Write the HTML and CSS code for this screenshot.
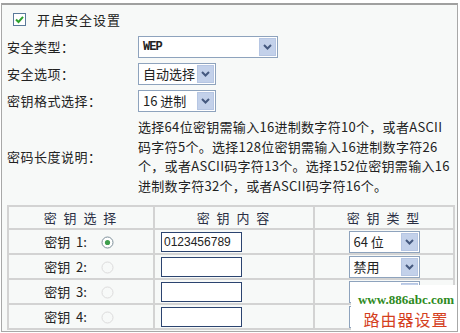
FILE: index.html
```html
<!DOCTYPE html>
<html lang="zh-CN">
<head>
    <meta charset="UTF-8">
    <title>无线安全设置</title>
    <link rel="stylesheet" href="styles.css">
</head>
<body>
<div class="panel">
    <div class="row check-row">
        <span class="checkbox">
            <svg width="13" height="13" viewBox="0 0 13 13"><rect x="0.5" y="0.5" width="12" height="12" fill="#fff" stroke="#5a7a9a"/><path d="M3 6.5l2.5 2.5L10 3.8" stroke="#2da12d" stroke-width="2" fill="none"/></svg>
        </span>
        <span class="check-text">开启安全设置</span>
    </div>
    <div class="row">
        <span class="label">安全类型：</span>
        <div class="sel sel-wep">
            <span class="sel-text wep">WEP</span>
            <span class="sel-btn"><svg width="9" height="6" viewBox="0 0 9 6"><path d="M1 1l3.5 3.5L8 1" stroke="#45597f" stroke-width="2" fill="none"/></svg></span>
        </div>
    </div>
    <div class="row">
        <span class="label">安全选项：</span>
        <div class="sel sel-short">
            <span class="sel-text">自动选择</span>
            <span class="sel-btn"><svg width="9" height="6" viewBox="0 0 9 6"><path d="M1 1l3.5 3.5L8 1" stroke="#45597f" stroke-width="2" fill="none"/></svg></span>
        </div>
    </div>
    <div class="row">
        <span class="label">密钥格式选择：</span>
        <div class="sel sel-short">
            <span class="sel-text">16 进制</span>
            <span class="sel-btn"><svg width="9" height="6" viewBox="0 0 9 6"><path d="M1 1l3.5 3.5L8 1" stroke="#45597f" stroke-width="2" fill="none"/></svg></span>
        </div>
    </div>
    <div class="row desc-row">
        <span class="label">密码长度说明：</span>
        <p class="desc">
            <span>选择64位密钥需输入16进制数字符10个，或者ASCII</span>
            <span>码字符5个。选择128位密钥需输入16进制数字符26</span>
            <span>个，或者ASCII码字符13个。选择152位密钥需输入16</span>
            <span>进制数字符32个，或者ASCII码字符16个。</span>
        </p>
    </div>
    <table class="keys">
        <colgroup>
            <col class="c1">
            <col class="c2">
            <col class="c3">
        </colgroup>
        <tr class="head">
            <td>密 钥 选 择</td>
            <td>密 钥 内 容</td>
            <td>密 钥 类 型</td>
        </tr>
        <tr>
            <td class="pick">密钥 1: <span class="radio"><svg width="13" height="13" viewBox="0 0 13 13"><circle cx="6.5" cy="6.5" r="5.5" fill="#fff" stroke="#7d8f99"/><circle cx="6.5" cy="6.5" r="2.6" fill="#3e9e4c"/></svg></span></td>
            <td class="val"><span class="field">0123456789</span></td>
            <td class="kind">
                <div class="sel sel-kind">
                    <span class="sel-text">64 位</span>
                    <span class="sel-btn"><svg width="9" height="6" viewBox="0 0 9 6"><path d="M1 1l3.5 3.5L8 1" stroke="#45597f" stroke-width="2" fill="none"/></svg></span>
                </div>
            </td>
        </tr>
        <tr>
            <td class="pick">密钥 2: <span class="radio"><svg width="13" height="13" viewBox="0 0 13 13"><circle cx="6.5" cy="6.5" r="5.5" fill="none" stroke="#dcdcdc"/></svg></span></td>
            <td class="val"><span class="field"></span></td>
            <td class="kind">
                <div class="sel sel-kind">
                    <span class="sel-text">禁用</span>
                    <span class="sel-btn"><svg width="9" height="6" viewBox="0 0 9 6"><path d="M1 1l3.5 3.5L8 1" stroke="#45597f" stroke-width="2" fill="none"/></svg></span>
                </div>
            </td>
        </tr>
        <tr>
            <td class="pick">密钥 3: <span class="radio"><svg width="13" height="13" viewBox="0 0 13 13"><circle cx="6.5" cy="6.5" r="5.5" fill="none" stroke="#dcdcdc"/></svg></span></td>
            <td class="val"><span class="field"></span></td>
            <td class="kind">
                <!-- 被右下角水印挡住 -->
                <div class="sel sel-kind">
                    <span class="sel-text"></span>
                    <span class="sel-btn"></span>
                </div>
            </td>
        </tr>
        <tr>
            <td class="pick">密钥 4: <span class="radio"><svg width="13" height="13" viewBox="0 0 13 13"><circle cx="6.5" cy="6.5" r="5.5" fill="none" stroke="#dcdcdc"/></svg></span></td>
            <td class="val"><span class="field"></span></td>
            <td class="kind">
                <div class="sel sel-kind">
                    <span class="sel-text"></span>
                    <span class="sel-btn"></span>
                </div>
            </td>
        </tr>
    </table>
    <div class="stamp">
        <span class="stamp-url">www.886abc.com</span>
        <span class="stamp-name">路由器设置</span>
    </div>
</div>
</body>
</html>
```

FILE: styles.css
```css
* {
    padding: 0;
    margin: 0;
    box-sizing: border-box;
}
body {
    background-color: #ffffff;
    font-family: "Noto Sans CJK SC", "Liberation Sans", sans-serif;
    font-size: 13px;
    color: #222222;
}
.panel {
    position: relative;
    width: 457px;
    height: 329px;
    margin: 3px 0 0 1px;
    border: 1px solid #a8a8a8;
    border-top: 2px solid #a0a0a0;
    background-color: #f7f9f8;
    padding: 0 3px 0 5px;
    overflow: hidden;
}
.row {
    display: flex;
    align-items: center;
    height: 27px;
}
.check-row {
    height: 28px;
    padding-left: 6px;
    gap: 11px;
}
.check-text {
    letter-spacing: 1px;
}
.checkbox {
    display: flex;
    width: 13px;
    height: 13px;
}
.label {
    width: 131px;
    flex-shrink: 0;
    letter-spacing: 0.5px;
}
.sel {
    display: flex;
    align-items: center;
    height: 22px;
    border: 1px solid #8ea3bd;
    background-color: #ffffff;
    padding: 1px;
}
.sel-wep {
    width: 140px;
}
.sel-short {
    width: 78px;
}
.sel-kind {
    width: 71px;
    margin: 0 auto;
}
.sel-text {
    flex: 1;
    padding-left: 3px;
    line-height: 18px;
    white-space: nowrap;
}
.wep {
    font-family: "Liberation Mono", monospace;
    font-weight: bold;
    font-size: 12px;
    letter-spacing: -1px;
}
.sel-btn {
    display: flex;
    align-items: center;
    justify-content: center;
    width: 17px;
    height: 18px;
    background-color: #c3d1ea;
    border: 1px solid #b6c6e3;
}
.desc-row {
    height: auto;
    margin-top: 3px;
}
.desc {
    font-size: 13px;
    line-height: 19.5px;
    letter-spacing: 0.3px;
}
.desc span {
    display: block;
    white-space: nowrap;
}
.keys {
    width: 446px;
    margin-top: 10px;
    border-collapse: collapse;
    table-layout: fixed;
}
.c1 {
    width: 146px;
}
.c2 {
    width: 160px;
}
.c3 {
    width: 140px;
}
.keys td {
    border: 2px solid #d3d3d3;
    height: 25px;
    padding: 0;
    vertical-align: middle;
}
.head td {
    height: 23px;
    text-align: center;
    letter-spacing: 2px;
    color: #2a2f44;
}
.pick {
    text-align: center;
    white-space: nowrap;
    word-spacing: 3px;
    padding-right: 4px !important;
}
.radio {
    display: inline-block;
    width: 13px;
    height: 13px;
    margin-left: 8px;
    vertical-align: -2px;
}
.radio svg {
    display: block;
}
.val {
    padding-left: 6px !important;
}
.field {
    display: block;
    width: 81px;
    height: 20px;
    border: 1px solid #2c4470;
    background-color: #ffffff;
    font-family: "Liberation Sans", sans-serif;
    font-size: 12px;
    line-height: 18px;
    padding-left: 2px;
}
.stamp {
    position: absolute;
    left: 349px;
    top: 280px;
    width: 110px;
    height: 52px;
    background-color: #ffffff;
    display: flex;
    flex-direction: column;
    align-items: center;
    padding-top: 7px;
}
.stamp-url {
    font-family: "Liberation Serif", serif;
    font-weight: bold;
    font-size: 13px;
    color: #2e8a22;
    line-height: 16px;
}
.stamp-name {
    font-size: 16px;
    letter-spacing: 1px;
    color: #d4401e;
    line-height: 22px;
}
```
